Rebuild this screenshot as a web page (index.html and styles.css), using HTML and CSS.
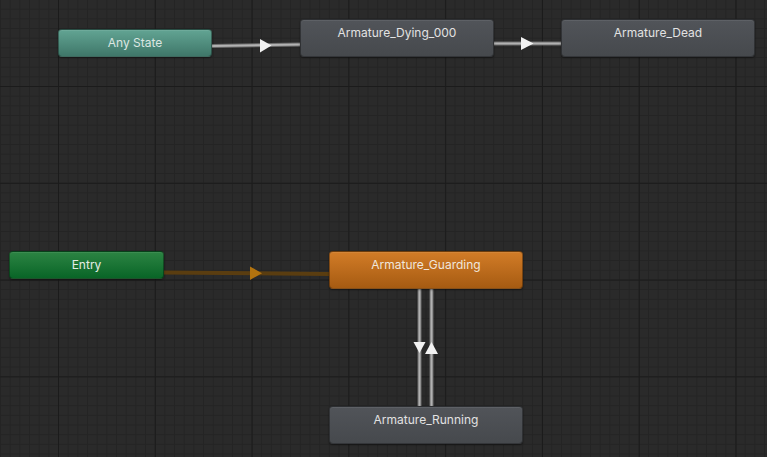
FILE: index.html
```html
<!DOCTYPE html>
<html>
<head>
<meta charset="utf-8">
<link rel="stylesheet" href="styles.css">
</head>
<body>
<div class="canvas">
  <svg class="links" width="767" height="457" viewBox="0 0 767 457">
    <g class="gray-link">
      <line x1="212" y1="46" x2="300" y2="44.5" class="edge"/>
      <line x1="212" y1="46" x2="300" y2="44.5" class="core"/>
      <line x1="494" y1="43.5" x2="561" y2="43.5" class="edge"/>
      <line x1="494" y1="43.5" x2="561" y2="43.5" class="core"/>
      <line x1="419.5" y1="289" x2="419.5" y2="406" class="edge"/>
      <line x1="419.5" y1="289" x2="419.5" y2="406" class="core"/>
      <line x1="431.5" y1="289" x2="431.5" y2="406" class="edge"/>
      <line x1="431.5" y1="289" x2="431.5" y2="406" class="core"/>
    </g>
    <line x1="164" y1="272.5" x2="329" y2="274" class="entry-link"/>
    <polygon points="260,39 271.5,45.5 260,52.5" class="head"/>
    <polygon points="521,37 533.5,43.5 521,50" class="head"/>
    <polygon points="250,266.5 262,273.2 250,280" class="head-orange"/>
    <polygon points="413.5,342 425.5,342 419.5,353" class="head"/>
    <polygon points="425,354 438,354 431.5,342" class="head"/>
  </svg>

  <div class="node node-any" style="left:58px;top:29px;width:154px;">Any State</div>
  <div class="node node-state" style="left:300px;top:19px;width:194px;">Armature_Dying_000</div>
  <div class="node node-state" style="left:561px;top:19px;width:194px;">Armature_Dead</div>
  <div class="node node-entry" style="left:9px;top:251px;width:155px;">Entry</div>
  <div class="node node-default" style="left:329px;top:251px;width:194px;">Armature_Guarding</div>
  <div class="node node-state" style="left:329px;top:406px;width:194px;">Armature_Running</div>
</div>
</body>
</html>
```
FILE: styles.css
```css
html, body {
  margin: 0;
  padding: 0;
  background: #2a2a2a;
}

.canvas {
  position: relative;
  width: 767px;
  height: 457px;
  overflow: hidden;
  background-color: #2a2a2a;
  background-image:
    linear-gradient(to right, #1b1b1b 0, #1b1b1b 1px, transparent 1px),
    linear-gradient(to bottom, #1b1b1b 0, #1b1b1b 1px, transparent 1px),
    linear-gradient(to right, #242424 0, #242424 1px, transparent 1px),
    linear-gradient(to bottom, #242424 0, #242424 1px, transparent 1px);
  background-size:
    96.8px 100%,
    100% 96.8px,
    9.68px 100%,
    100% 9.68px;
  background-position:
    58px 0,
    0 86px,
    58px 0,
    0 86px;
  font-family: Inter, "Noto Sans", sans-serif;
}

.links {
  position: absolute;
  left: 0;
  top: 0;
}

.gray-link .edge {
  stroke: #6c6c6c;
  stroke-width: 4;
}

.gray-link .core {
  stroke: #b2b2b2;
  stroke-width: 2;
}

.entry-link {
  stroke: #5a3d10;
  stroke-width: 4;
}

.head {
  fill: #f2f2f2;
}

.head-orange {
  fill: #b2730f;
}

.node {
  position: absolute;
  box-sizing: border-box;
  height: 38px;
  border-radius: 4px;
  border: 1px solid rgba(0, 0, 0, 0.35);
  box-shadow: 0 1px 2px rgba(0, 0, 0, 0.45), inset 0 1px 0 rgba(255, 255, 255, 0.08);
  color: #e2e2e2;
  font-size: 12px;
  line-height: 26px;
  text-align: center;
  white-space: nowrap;
}

.node-any,
.node-entry {
  height: 28px;
}

.node-any {
  background: linear-gradient(to bottom, #62a493, #3f7769);
  color: #dce6e2;
}

.node-entry {
  background: linear-gradient(to bottom, #2c8443, #096527);
  color: #e4ede6;
}

.node-state {
  background: linear-gradient(to bottom, #515459, #46494d);
}

.node-default {
  background: linear-gradient(to bottom, #d27c27, #a65b12);
  color: #f0e6dc;
}
```
